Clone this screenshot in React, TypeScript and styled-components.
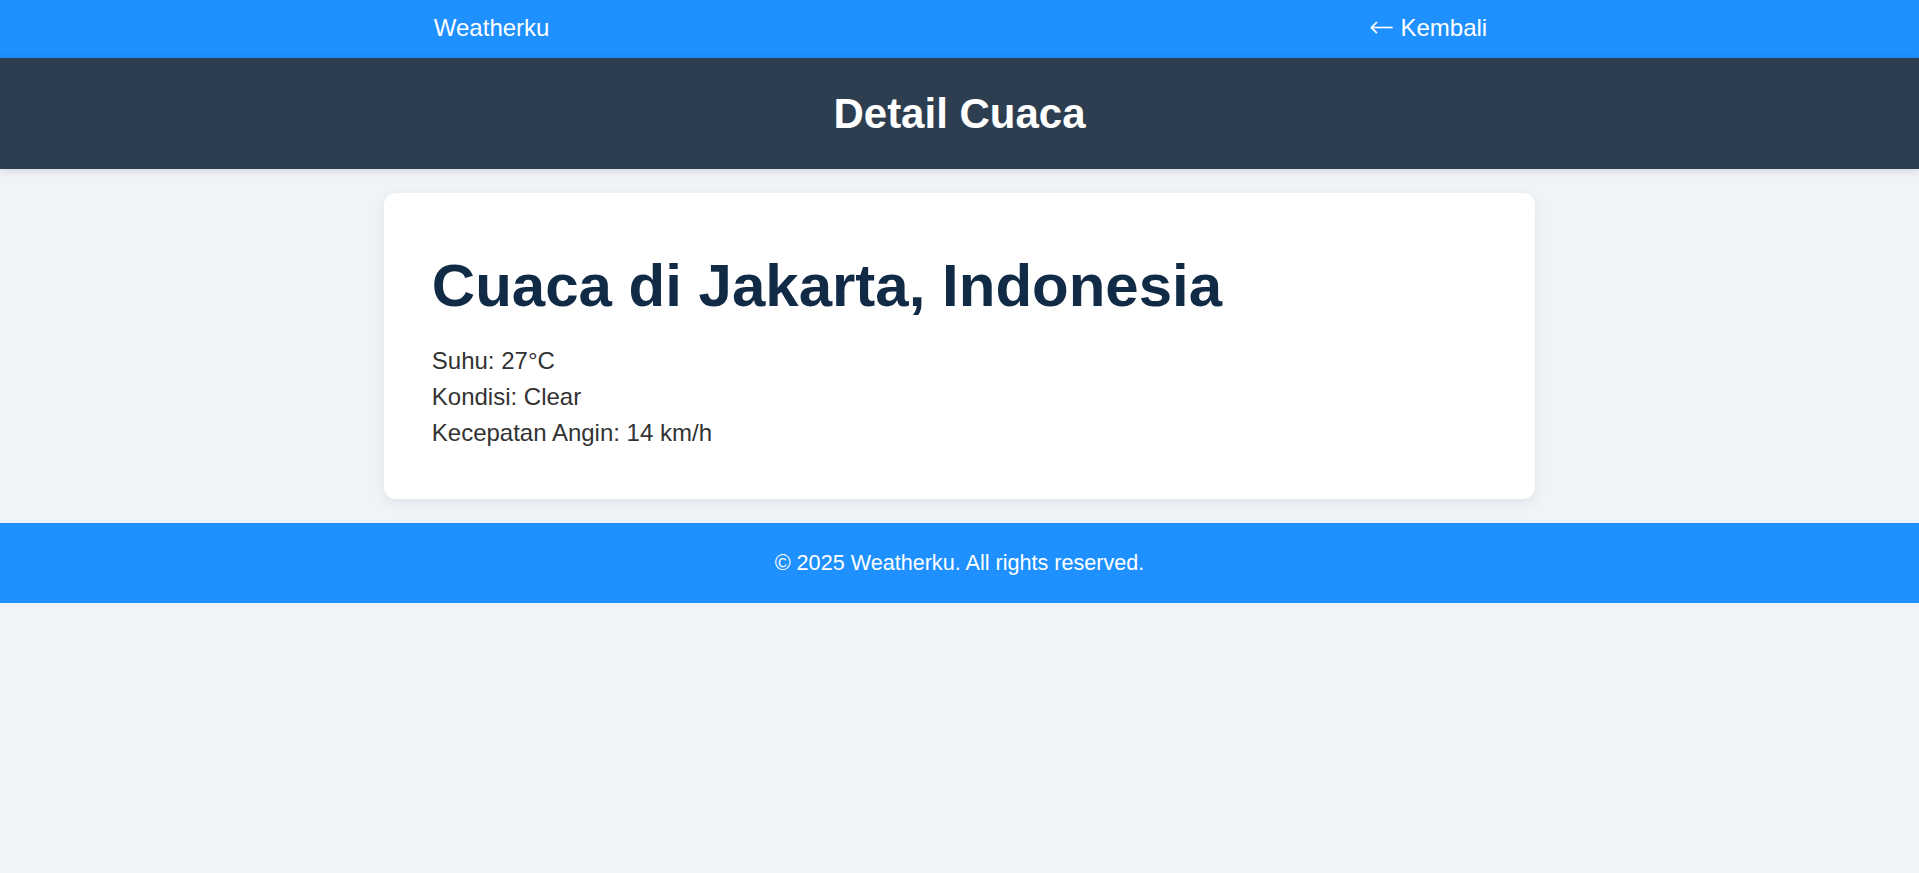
import React from "react";
import styled, { createGlobalStyle } from "styled-components";

const GlobalStyle = createGlobalStyle`
  html, body {
    margin: 0;
    padding: 0;
    background: #f0f3f7;
    font-family: "Liberation Sans", Arial, sans-serif;
    color: #333333;
  }
  * { box-sizing: border-box; }
`;

const NavBar = styled.nav`
  background: #1e90ff;
  padding: 10px 0 12px;
`;

const NavInner = styled.div`
  width: 60%;
  margin: 0 auto;
  padding: 0 48px 0 50px;
  display: flex;
  justify-content: space-between;
  align-items: center;
  line-height: 36px;
  font-size: 24px;
`;

const NavLink = styled.a`
  color: #ffffff;
  text-decoration: none;
  display: inline-flex;
  align-items: center;
`;

const Arrow = styled.span`
  font-family: "DejaVu Sans", sans-serif;
  font-weight: 200;
  font-size: 30px;
  line-height: 36px;
  margin-right: 6px;
  position: relative;
  top: -1px;
`;

const Header = styled.header`
  background: #2c3e50;
  padding: 24px 0;
  text-align: center;
  box-shadow: 0 2px 8px rgba(0, 0, 0, 0.12);
  position: relative;
`;

const HeaderTitle = styled.h1`
  margin: 0;
  font-size: 42px;
  line-height: 63px;
  font-weight: 700;
  color: #ffffff;
`;

const Main = styled.main`
  padding: 24px 0;
`;

const Card = styled.section`
  width: 60%;
  margin: 0 auto;
  background: #ffffff;
  border-radius: 12px;
  padding: 48px;
  box-shadow: 0 4px 14px rgba(0, 0, 0, 0.07);
`;

const CityTitle = styled.h2`
  margin: 0 0 12px;
  font-size: 60px;
  line-height: 90px;
  font-weight: 700;
  color: #112b46;
`;

const InfoLine = styled.p`
  margin: 0;
  font-size: 24px;
  line-height: 36px;
  color: #333333;
`;

const Footer = styled.footer`
  background: #1e90ff;
  padding: 24px 0;
  text-align: center;
  color: #ffffff;
  font-size: 21.6px;
  line-height: 32px;
`;

const info = [
  "Suhu: 27°C",
  "Kondisi: Clear",
  "Kecepatan Angin: 14 km/h",
];

export default function App() {
  return (
    <>
      <GlobalStyle />
      <NavBar>
        <NavInner>
          <NavLink href="#">Weatherku</NavLink>
          <NavLink href="#">
            <Arrow>←</Arrow>Kembali
          </NavLink>
        </NavInner>
      </NavBar>
      <Header>
        <HeaderTitle>Detail Cuaca</HeaderTitle>
      </Header>
      <Main>
        <Card>
          <CityTitle>Cuaca di Jakarta, Indonesia</CityTitle>
          {info.map((line) => (
            <InfoLine key={line}>{line}</InfoLine>
          ))}
        </Card>
      </Main>
      <Footer>© 2025 Weatherku. All rights reserved.</Footer>
    </>
  );
}
